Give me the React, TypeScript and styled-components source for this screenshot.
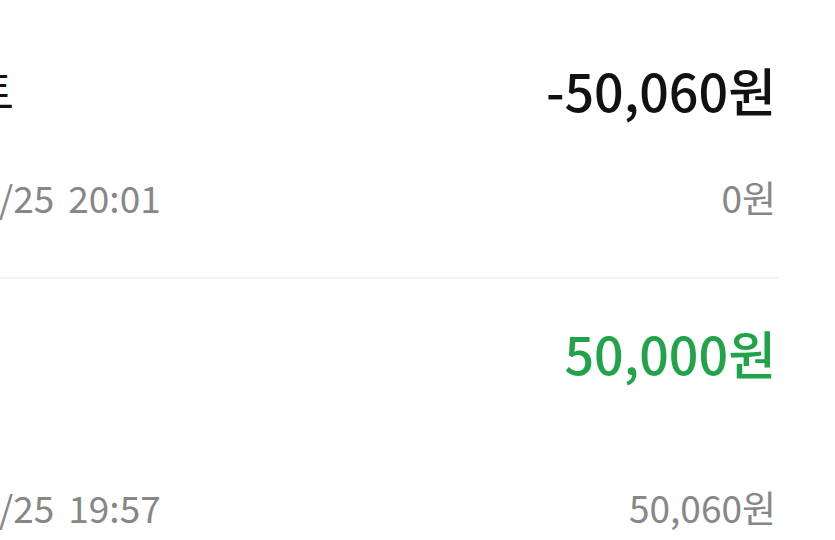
import React from "react";
import styled, { createGlobalStyle } from "styled-components";

const GlobalStyle = createGlobalStyle`
  html, body {
    margin: 0;
    padding: 0;
    background: #ffffff;
    overflow: hidden;
  }
  body {
    font-family: "Noto Sans CJK KR", "Noto Sans", sans-serif;
    -webkit-font-smoothing: antialiased;
  }
`;

// the list is scrolled sideways in the shot, so its left column starts off-screen
const List = styled.ul`
  list-style: none;
  margin: 0 0 0 -139px;
  padding: 16px 59px 0 0;
`;

const Item = styled.li<{ $divider?: boolean }>`
  padding: 41px 2px 54px 0;
  margin-right: -2px;
  border-bottom: ${(p) => (p.$divider ? "2px solid #f2f2f2" : "none")};
`;

const TopRow = styled.div`
  display: flex;
  align-items: center;
  justify-content: space-between;
  height: 64px;
`;

const Title = styled.span`
  padding-left: 26px;
  font-size: 46px;
  color: #111111;
  white-space: nowrap;
`;

const Amount = styled.span<{ $income?: boolean }>`
  font-size: 52px;
  font-weight: 500;
  color: ${(p) => (p.$income ? "#21a349" : "#111111")};
`;

const DetailRow = styled.div<{ $space: number }>`
  display: flex;
  align-items: center;
  justify-content: space-between;
  height: 52px;
  margin-top: ${(p) => p.$space}px;
  color: #878787;
  font-size: 37px;
`;

const DateText = styled.span`
  display: flex;
  gap: 14px;
`;

const Balance = styled.span``;

type Tx = {
  title: string;
  amount: string;
  income?: boolean;
  date: string;
  time: string;
  balance: string;
  space: number;
};

const txs: Tx[] = [
  {
    title: "포인트",
    amount: "-50,060원",
    date: "2024/09/25",
    time: "20:01",
    balance: "0원",
    space: 50,
  },
  {
    title: "충전",
    amount: "50,000원",
    income: true,
    date: "2024/09/25",
    time: "19:57",
    balance: "50,060원",
    space: 97,
  },
];

export default function App() {
  return (
    <>
      <GlobalStyle />
      <List>
        {txs.map((tx, i) => (
          <Item key={i} $divider={i < txs.length - 1}>
            <TopRow>
              <Title>{tx.title}</Title>
              <Amount $income={tx.income}>{tx.amount}</Amount>
            </TopRow>
            <DetailRow $space={tx.space}>
              <DateText>
                <span>{tx.date}</span>
                <span>{tx.time}</span>
              </DateText>
              <Balance>{tx.balance}</Balance>
            </DetailRow>
          </Item>
        ))}
      </List>
    </>
  );
}
